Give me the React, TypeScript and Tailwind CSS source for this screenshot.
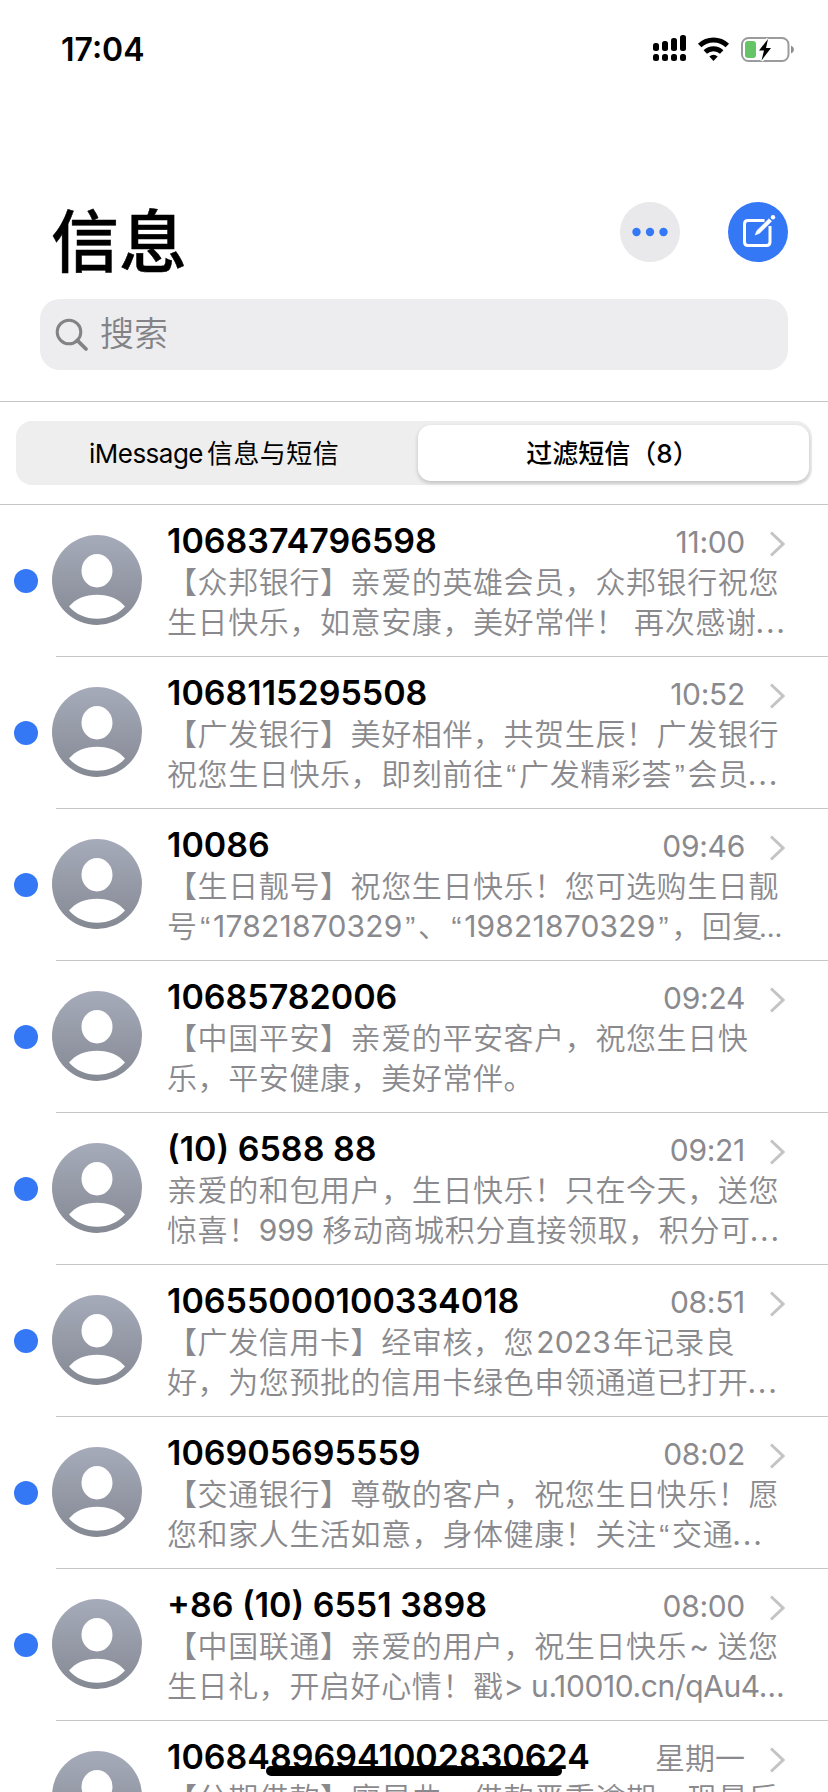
import React from "react";

const RUNS = /[“”]|\.\.\.$|[\x20-\x7e…]+?(?=\.\.\.$)|[\x20-\x7e…]+|[^\x20-\x7e“”…]+/g;

function runClass(run: string, prev: string, next: string) {
  if (run === "“" || run === "”")
    return "inline-block w-[15.5px] text-center font-normal font-['Liberation_Sans',sans-serif]";
  if (run === "...") return "-ml-px font-normal tracking-[1.8px]";
  if (run === "…") return "-ml-1 text-[27px] font-normal";
  if (/^\d+$/.test(run))
    return prev === "“" && next === "”"
      ? "font-normal tracking-[0.2px]"
      : "mx-0.5 font-normal tracking-[0.2px]";
  if (run.startsWith("~")) return "ml-0.5 font-normal";
  if (/^\d+ $/.test(run)) return "font-normal tracking-[-0.2px]";
  if (/^[\x20-\x7e…]+$/.test(run)) return "font-normal tracking-[-0.4px]";
  return "tracking-[0.6px]";
}

function PreviewLine({ text }: { text: string }) {
  const runs: string[] = text.match(RUNS) ?? [];
  return (
    <div className="h-10 whitespace-pre leading-10">
      {runs.map((r, i) => (
        <span key={i} className={runClass(r, runs[i - 1] ?? "", runs[i + 1] ?? "")}>
          {r}
        </span>
      ))}
    </div>
  );
}

type Message = { name: string; time: string; lines: [string, string]; unread: boolean };

const messages: Message[] = [
  { name: "1068374796598", time: "11:00", unread: true, lines: ["【众邦银行】亲爱的英雄会员，众邦银行祝您", "生日快乐，如意安康，美好常伴！ 再次感谢..."] },
  { name: "1068115295508", time: "10:52", unread: true, lines: ["【广发银行】美好相伴，共贺生辰！广发银行", "祝您生日快乐，即刻前往“广发精彩荟”会员..."] },
  { name: "10086", time: "09:46", unread: true, lines: ["【生日靓号】祝您生日快乐！您可选购生日靓", "号“17821870329”、“19821870329”，回复…"] },
  { name: "10685782006", time: "09:24", unread: true, lines: ["【中国平安】亲爱的平安客户，祝您生日快", "乐，平安健康，美好常伴。"] },
  { name: "(10) 6588 88", time: "09:21", unread: true, lines: ["亲爱的和包用户，生日快乐！只在今天，送您", "惊喜！999 移动商城积分直接领取，积分可..."] },
  { name: "10655000100334018", time: "08:51", unread: true, lines: ["【广发信用卡】经审核，您2023年记录良", "好，为您预批的信用卡绿色申领通道已打开..."] },
  { name: "106905695559", time: "08:02", unread: true, lines: ["【交通银行】尊敬的客户，祝您生日快乐！愿", "您和家人生活如意，身体健康！关注“交通..."] },
  { name: "+86 (10) 6551 3898", time: "08:00", unread: true, lines: ["【中国联通】亲爱的用户，祝生日快乐~ 送您", "生日礼，开启好心情！戳> u.10010.cn/qAu4…"] },
  { name: "10684896941002830624", time: "星期一", unread: false, lines: ["【分期借款】廖昱曲，借款严重逾期，现最后", ""] },
];

function Avatar() {
  return (
    <svg viewBox="0 0 90 90" className="mt-[30px] ml-[14px] h-[90px] w-[90px] shrink-0">
      <defs>
        <linearGradient id="avatar" x1="0" y1="0" x2="0" y2="1">
          <stop offset="0" stopColor="#a6abba" />
          <stop offset="1" stopColor="#858993" />
        </linearGradient>
      </defs>
      <circle cx="45" cy="45" r="45" fill="url(#avatar)" />
      <ellipse cx="45" cy="35.700" rx="15.500" ry="16.700" fill="#fff" />
      <path d="M17 71.500C23 64 33 59.700 45 59.700S67 64 73 71.500C66 79.500 56 83.700 45 83.700S24 79.500 17 71.500Z" fill="#fff" />
    </svg>
  );
}

function Row({ m }: { m: Message }) {
  const clock = m.time.includes(":");
  return (
    <div className="flex h-[152px] shrink-0">
      <div className={`mt-16 ml-[14px] h-6 w-6 shrink-0 rounded-full ${m.unread ? "bg-[#3478f6]" : ""}`} />
      <Avatar />
      <div className="ml-[25px] min-w-0 flex-1 pt-[15px]">
        <div className="flex h-[42px] items-center">
          <span className="text-[34px] leading-[42px] font-semibold whitespace-nowrap text-black">{m.name}</span>
          <span className={`ml-auto text-[30px] whitespace-nowrap text-[#8a8a8e] ${clock ? "mt-[3px] font-normal tracking-[-0.3px]" : "mt-0.5 font-[350]"}`}>{m.time}</span>
          <svg viewBox="0 0 16 26" className="mt-1.5 mr-[43px] ml-6 h-[26px] w-4" fill="none" stroke="#c4c4c7" strokeWidth="3">
            <path d="M2 1.500L14 13L2 24.500" />
          </svg>
        </div>
        <div className="text-[30px] font-[350] text-[#8a8a8e]">
          <PreviewLine text={m.lines[0]} />
          <PreviewLine text={m.lines[1]} />
        </div>
      </div>
    </div>
  );
}

function StatusIcons() {
  return (
    <svg viewBox="0 0 146 30" className="mt-[34px] mr-[32px] h-[30px] w-[146px]">
      {[0, 1, 2, 3].map((i) => {
        const top = [9, 7, 4, 1][i];
        return (
          <g key={i}>
            <rect x={3 + i * 9} y={top} width="6" height={17 - top} rx="2.500" />
            <rect x={3 + i * 9} y="20" width="6" height="7" rx="2.500" />
          </g>
        );
      })}
      <g fill="none" stroke="#000" strokeWidth="5">
        <path d="M49.700 11.500A20 20 0 0 1 77.300 11.500" />
        <path d="M55.300 18A12 12 0 0 1 71.700 18" />
      </g>
      <path d="M59.300 22.500Q63.500 19 67.700 22.500L63.500 27Z" />
      <rect x="92" y="4" width="46.500" height="23" rx="6.500" fill="none" stroke="#9b9b9d" strokeWidth="2" />
      <path d="M141 11.500Q144 13 144 15.500T141 19.500Z" fill="#8e8e90" />
      <rect x="95" y="7" width="11" height="17" rx="3" fill="#65c466" />
      <path d="M118 5L109 16.500H114L111.500 26.500L121 14H116Z" fill="#000" stroke="#fff" strokeWidth="3.500" paintOrder="stroke" />
    </svg>
  );
}

export default function App() {
  return (
    <div className="relative flex h-[1792px] w-[828px] flex-col overflow-hidden bg-white font-['Inter','Noto_Sans_CJK_SC',sans-serif] text-black">
      <header className="flex h-[202px] shrink-0 items-start justify-between">
        <span className="mt-[30px] ml-[61px] text-[32px] leading-10 font-semibold">17:04</span>
        <StatusIcons />
      </header>

      <div className="flex h-[97px] shrink-0 items-start">
        <h1 className="ml-[51px] text-[68px] leading-[80px] font-medium [-webkit-text-stroke:0.5px_black]">信息</h1>
        <svg viewBox="0 0 60 60" className="mr-12 ml-auto h-[60px] w-[60px]">
          <circle cx="30" cy="30" r="30" fill="#e9e9eb" />
          <g fill="#3478f6">
            <circle cx="16.500" cy="30" r="4.200" />
            <circle cx="30" cy="30" r="4.200" />
            <circle cx="43.500" cy="30" r="4.200" />
          </g>
        </svg>
        <svg viewBox="0 0 60 60" className="mr-10 h-[60px] w-[60px]">
          <circle cx="30" cy="30" r="30" fill="#3478f6" />
          <path d="M36.500 18.500H20Q16.500 18.500 16.500 22V40Q16.500 43.500 20 43.500H38.500Q42 43.500 42 40V24" fill="none" stroke="#fff" strokeWidth="3" />
          <path d="M27.200 33L29 28.600L41 16.700L43.600 19.300L31.600 31.200Z" fill="#fff" stroke="#fff" strokeWidth="0.600" />
          <circle cx="45" cy="15.300" r="2.200" fill="#fff" />
        </svg>
      </div>

      <div className="mx-10 flex h-[71px] w-[748px] shrink-0 items-center rounded-[20px] bg-[#ededef]">
        <svg viewBox="0 0 34 34" className="ml-[15px] h-[34px] w-[34px]" fill="none" stroke="#838387" strokeWidth="3">
          <circle cx="14" cy="14" r="11.800" />
          <path d="M22.300 22.300L31 31" strokeWidth="3.800" strokeLinecap="round" />
        </svg>
        <span className="-mt-0.5 ml-[11px] text-[34px] font-[350] text-[#838387]">搜索</span>
      </div>

      <div className="mt-[31px] flex h-[104px] shrink-0 items-center border-y border-[#c6c6c8] px-4">
        <div className="flex h-16 w-full rounded-[16px] bg-[#eeeeee] p-1 pr-[3px] text-[26px]">
          <div className="flex flex-1 items-center justify-center pr-2.5">
            <span className="tracking-[-0.5px]">iMessage</span>
            <span className="ml-1 tracking-[0.4px]">信息与短信</span>
          </div>
          <div className="flex w-[391px] items-center justify-center rounded-[13px] bg-white pr-0.5 font-medium shadow-[0_2px_4px_rgba(0,0,0,0.2)]">
            过滤短信（8）
          </div>
        </div>
      </div>

      <main className="flex flex-col">
        {messages.map((m) => (
          <div key={m.name} className="flex shrink-0 flex-col">
            <div className="-mb-px"><Row m={m} /></div>
            <div className="ml-14 h-px bg-[#c6c6c8]" />
          </div>
        ))}
      </main>

      <div className="absolute top-[1766px] left-[266px] h-[10px] w-[296px] rounded-full bg-black" />
    </div>
  );
}
